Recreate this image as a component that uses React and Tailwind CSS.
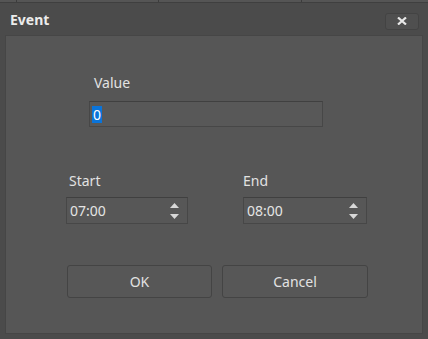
import React from 'react';

const Spinner = () => (
  <div className="flex flex-col items-center gap-[6px] mr-[8px]">
    <svg width="9" height="5" viewBox="0 0 9 5"><path d="M0 5 L4.5 0 L9 5 Z" fill="#d8d8d8" /></svg>
    <svg width="9" height="5" viewBox="0 0 9 5"><path d="M0 0 L4.5 5 L9 0 Z" fill="#d8d8d8" /></svg>
  </div>
);

const TimeField = ({ value, width }) => (
  <div className={`flex items-center justify-between h-[27px] ${width} bg-[#575757] border border-[#474747] border-t-[#404040]`}>
    <span className="pl-[3px] text-[14px] text-[#e4e4e4]">{value}</span>
    <Spinner />
  </div>
);

export default function App() {
  return (
    <div className="w-[428px] h-[339px] bg-[#4b4b4b] flex flex-col font-['Noto_Sans',sans-serif] overflow-hidden">
      <div className="h-[3px] flex border-b border-[#3f3f3f] bg-[#555555]">
        <div className="w-[17px] border-r border-[#3c3c3c]" />
        <div className="w-[142px] border-r border-[#3c3c3c]" />
        <div className="w-[143px] border-r border-[#3c3c3c]" />
        <div className="flex-1" />
      </div>
      <div className="h-[32px] flex items-center justify-between pl-[10px] pr-[9px]">
        <span className="text-[14px] font-bold text-[#ececec] leading-none mt-[2px]">Event</span>
        <div className="w-[34px] h-[17px] flex items-center justify-center rounded-[3px] bg-[#4f4f4f] border border-[#434343] mt-[4px]">
          <svg width="10" height="8" viewBox="0 0 10 8">
            <path d="M1 0.5 L9 7.5 M9 0.5 L1 7.5" stroke="#e8e8e8" strokeWidth="2.2" />
          </svg>
        </div>
      </div>
      <div className="mx-[5px] h-[299px] border border-[#464646] bg-[#565656] flex flex-col text-[#e2e2e2] text-[14px] leading-[18px]">
        <div className="pl-[83px] pt-[38px]">
          <div className="pl-[5px]">Value</div>
          <div className="mt-[9px] w-[234px] h-[26px] bg-[#585858] border border-[#474747] border-t-[#404040] flex items-center pl-[2px]">
            <span className="bg-[#0a74da] text-white px-[1px] leading-[17px]">0</span>
          </div>
        </div>
        <div className="flex pl-[60px] pt-[45px] gap-[55px]">
          <div className="flex flex-col">
            <div className="pl-[3px]">Start</div>
            <div className="mt-[7px]"><TimeField value="07:00" width="w-[122px]" /></div>
          </div>
          <div className="flex flex-col">
            <div>End</div>
            <div className="mt-[7px]"><TimeField value="08:00" width="w-[124px]" /></div>
          </div>
        </div>
        <div className="flex pl-[61px] pt-[41px] gap-[10px]">
          <button className="w-[145px] h-[33px] rounded-[3px] border border-[#444444] bg-[#575757] text-[#e2e2e2]">OK</button>
          <button className="w-[146px] h-[33px] rounded-[3px] border border-[#444444] bg-[#575757] text-[#e2e2e2]">Cancel</button>
        </div>
      </div>
    </div>
  );
}
